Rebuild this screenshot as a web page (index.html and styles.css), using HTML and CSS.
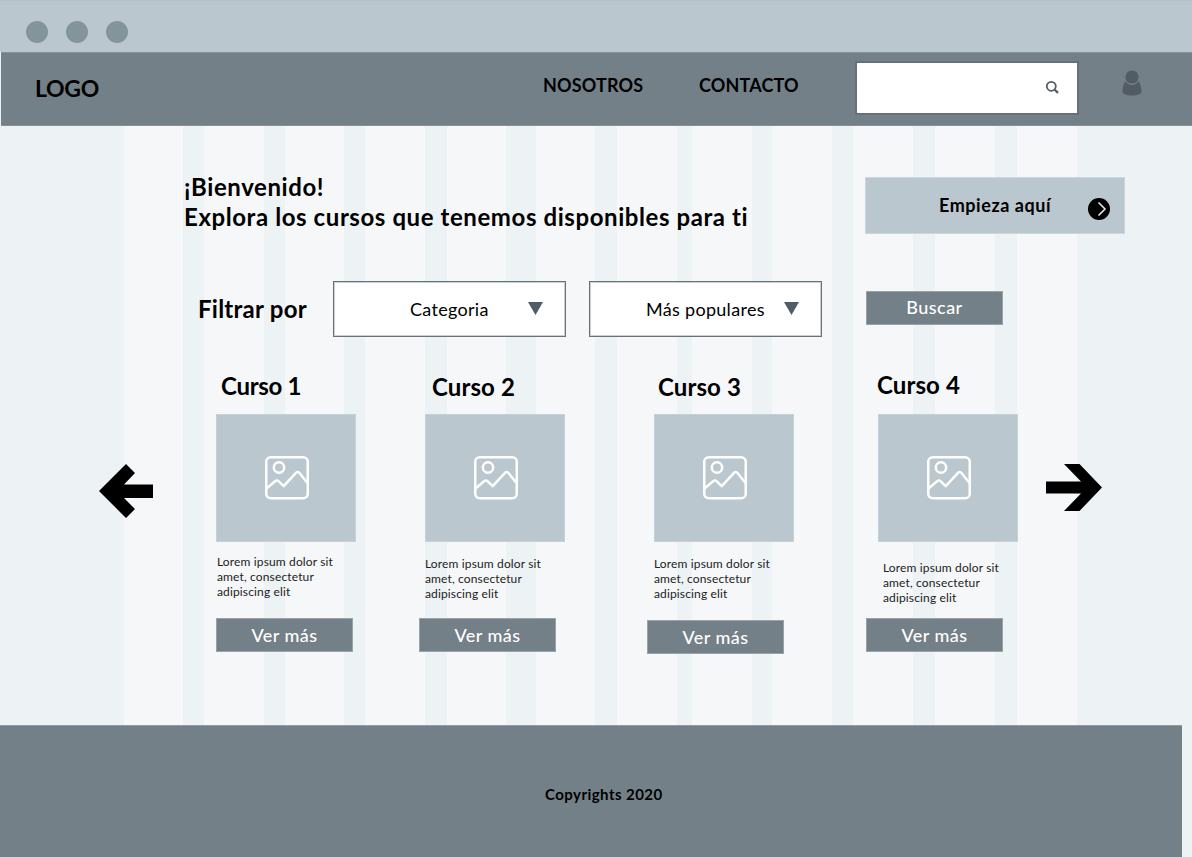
FILE: index.html
```html
<!DOCTYPE html>
<html lang="es">
<head>
<meta charset="utf-8">
<title>Cursos</title>
<link rel="stylesheet" href="styles.css">
</head>
<body>
<svg class="defs" width="0" height="0">
  <symbol id="picture" viewBox="0 0 44 44">
    <g fill="none" stroke="#fff" stroke-width="2.500" stroke-linejoin="round">
      <rect x="1.250" y="1.250" width="41.500" height="41" rx="4.500"/>
      <circle cx="14" cy="11.500" r="5.200"/>
      <path d="M1.500 32.500 L10.400 25 Q12 23.800 13.500 25.200 L18.700 30.200 L30.500 17.300 Q32.600 14.800 34.700 17.300 L42.500 27"/>
    </g>
  </symbol>
</svg>
<div class="chrome"><i class="dot"></i><i class="dot"></i><i class="dot"></i></div>
<nav class="nav">
  <span class="logo">LOGO</span>
  <a class="link nosotros">NOSOTROS</a>
  <a class="link contacto">CONTACTO</a>
  <div class="search">
    <svg width="14" height="14" viewBox="0 0 14 14" fill="none" stroke="#525c64"><circle cx="6.300" cy="6.300" r="4.500" stroke-width="1.800"/><path d="M9.500 9.500l3.500 3.300" stroke-width="2.300"/></svg>
  </div>
  <svg class="user" width="20" height="26" viewBox="0 0 20 26" fill="#525c64"><circle cx="10" cy="7" r="6.600"/><path d="M3.700 11.200C5 13.600 7.300 14.900 10 14.900s5-1.300 6.300-3.700c2.200 2.300 3.200 6.300 3.200 10.300C19.500 24 15.500 25.500 10 25.500S.5 24 .5 21.500c0-4 1-8 3.200-10.300z"/></svg>
</nav>
<main class="main">
  <div class="intro">
    <h1 class="title">¡Bienvenido!<br>Explora los cursos que tenemos disponibles para ti</h1>
    <a class="start"><span class="start-text">Empieza aquí</span>
      <svg width="22" height="22" viewBox="0 0 22 22"><circle cx="11" cy="11" r="11"/><path d="M10.500 4.500l6.500 6.500-6.500 6.500" fill="none" stroke="#dfe7eb" stroke-width="1.600"/></svg></a>
  </div>
  <div class="filters">
    <span class="label">Filtrar por</span>
    <div class="select"><span class="option">Categoria</span><i class="caret"></i></div>
    <div class="select"><span class="option wide">Más populares</span><i class="caret"></i></div>
    <a class="button find">Buscar</a>
  </div>
  <div class="carousel">
    <svg class="prev" width="54" height="54" viewBox="0 0 54 54"><path d="M0 27L27 0l9 9-11 11.500h29v13.500H25L36 45l-9 9z"/></svg>
    <article class="card c1"><h2>Curso 1</h2><div class="thumb"><svg class="pic"><use href="#picture"/></svg></div><p>Lorem ipsum dolor sit<br>amet, consectetur<br>adipiscing elit</p><a class="button">Ver más</a></article>
    <article class="card c2"><h2>Curso 2</h2><div class="thumb"><svg class="pic"><use href="#picture"/></svg></div><p>Lorem ipsum dolor sit<br>amet, consectetur<br>adipiscing elit</p><a class="button">Ver más</a></article>
    <article class="card c3"><h2>Curso 3</h2><div class="thumb"><svg class="pic"><use href="#picture"/></svg></div><p>Lorem ipsum dolor sit<br>amet, consectetur<br>adipiscing elit</p><a class="button">Ver más</a></article>
    <article class="card c4"><h2>Curso 4</h2><div class="thumb"><svg class="pic"><use href="#picture"/></svg></div><p>Lorem ipsum dolor sit<br>amet, consectetur<br>adipiscing elit</p><a class="button">Ver más</a></article>
    <svg class="next" width="56" height="47" viewBox="0 0 56 47"><path d="M18 0h15.500L56 23.500 33.500 47H18l17-17.500H0v-12h35z"/></svg>
  </div>
</main>
<footer class="footer">Copyrights 2020</footer>
</body>
</html>
```
FILE: styles.css
```css
* { box-sizing: border-box; }

body {
  margin: 0;
  width: 1192px;
  height: 857px;
  overflow: hidden;
  background: #edf2f5;
  color: #000;
  font-family: Lato, "Open Sans", sans-serif;
  white-space: nowrap;
}

.defs { position: absolute; }

.chrome {
  display: flex;
  gap: 18px;
  height: 52px;
  padding: 20px 0 0 26px;
  border-top: 1px solid #b5bfc5;
  background: #bbc7cf;
}

.dot { width: 22px; height: 22px; border-radius: 50%; background: #84949b; }

.nav {
  display: flex;
  align-items: flex-start;
  height: 74px;
  margin-left: 1px;
  background: #738088;
  border-top: 1px solid #84939a;
  border-bottom: 1px solid #84939a;
}

.logo { width: 542px; padding: 21px 0 0 34px; font-size: 23px; line-height: 28px; font-weight: 700; letter-spacing: -0.3px; }
.link { padding-top: 21px; font-size: 18px; line-height: 22px; font-weight: 700; letter-spacing: 0.15px; }
.nosotros { width: 156px; }
.contacto { width: 156px; }

.search {
  width: 224px;
  height: 54px;
  margin-top: 8px;
  padding: 17px 0 0 188px;
  background: #fff;
  border: 2px solid #65717a;
}
.search svg { display: block; }

.user { margin: 17px 0 0 43px; }

.main {
  height: 599px;
  background: linear-gradient(90deg,
    #edf2f5 124px, #f5f7f9 124px 183px,
    #edf2f5 183px 204px, #f5f7f9 204px 264px,
    #edf2f5 264px 285px, #f5f7f9 285px 344px,
    #edf2f5 344px 365px, #f5f7f9 365px 425px,
    #edf2f5 425px 447px, #f5f7f9 447px 506px,
    #edf2f5 506px 536px, #f5f7f9 536px 595px,
    #edf2f5 595px 617px, #f5f7f9 617px 677px,
    #edf2f5 677px 692px, #f5f7f9 692px 752px,
    #edf2f5 752px 772px, #f5f7f9 772px 832px,
    #edf2f5 832px 853px, #f5f7f9 853px 913px,
    #edf2f5 913px 935px, #f5f7f9 935px 995px,
    #edf2f5 995px 1017px, #f5f7f9 1017px 1077px,
    #edf2f5 1077px);
}

.intro { display: flex; height: 155px; padding: 46px 0 0 184px; }
.title { width: 681px; margin: 0; font-size: 24px; line-height: 30px; font-weight: 700; letter-spacing: 0.58px; }

.start {
  display: flex;
  width: 260px;
  height: 57px;
  margin-top: 5px;
  border: 1px solid #ccd6dc;
  background: #bbc7cf;
  font-size: 18px;
  font-weight: 700;
  letter-spacing: 0.55px;
}
.start-text { width: 222px; padding: 16px 0 0 73px; line-height: 22px; }
.start svg { margin-top: 20px; }

.filters { display: flex; height: 88px; padding-left: 198px; }
.label { width: 135px; font-size: 24px; line-height: 55px; font-weight: 700; letter-spacing: 0.25px; }

.select {
  display: flex;
  width: 233px;
  height: 56px;
  margin-right: 23px;
  border: 1px solid #66737b;
  outline: 1px solid #c9cfd2;
  outline-offset: -2px;
  background: #fff;
  font-size: 18px;
  line-height: 55px;
  letter-spacing: 0.3px;
}
.option { width: 194px; padding-left: 76px; }
.option.wide { padding-left: 56px; }
.caret { width: 15px; height: 13px; margin-top: 20px; background: #525c64; clip-path: polygon(0 0, 100% 0, 50% 100%); }

.button {
  width: 137px;
  height: 34px;
  border: 1px solid #98a4aa;
  background: #738088;
  color: #fff;
  font-size: 18px;
  line-height: 32px;
  font-weight: 500;
  letter-spacing: 0.45px;
  text-align: center;
}
.find { margin: 10px 0 0 21px; line-height: 31px; }

.carousel { display: flex; padding-left: 99px; }
.prev { margin: 95px 63px 0 0; flex: none; }
.next { margin: 95px 0 0 0; flex: none; }

.card { display: flex; flex-direction: column; flex: none; }
.card h2 { height: 45px; margin: 0; font-size: 24px; line-height: 30px; font-weight: 700; letter-spacing: 0.1px; }
.thumb { width: 140px; height: 128px; padding: 41px 0 0 49px; border: 1px solid #c6d0d7; background: #bbc7cf; }
.pic { display: block; width: 44px; height: 44px; margin-left: -1px; }
.card p { height: 76px; margin: 0; padding: 12px 0 0 1px; color: #222; font-size: 12px; line-height: 15px; letter-spacing: 0.14px; }

.c1 { width: 209px; }
.c2 { width: 229px; }
.c3 { width: 224px; }
.c4 { width: 168px; }
.card.c1 h2 { padding: 2px 0 0 5px; letter-spacing: -0.3px; }
.c2 h2 { padding: 3px 0 0 7px; }
.c3 h2 { padding: 3px 0 0 4px; }
.c4 h2 { margin-left: -2px; padding: 1px 0 0 1px; }
.card.c2 p { padding-top: 14px; margin-left: -1px; }
.c2 .button { margin-left: -6px; }
.card.c3 p { padding: 14px 0 0; height: 78px; }
.c3 .button { margin-left: -7px; }
.card.c4 p { padding: 18px 0 0 5px; }
.c4 .button { margin-left: -12px; }

.footer {
  width: 1182px;
  height: 132px;
  padding: 59px 0 0 545px;
  border-top: 1px solid #929da3;
  background: #738088;
  font-size: 15px;
  line-height: 18px;
  font-weight: 700;
  letter-spacing: 0.45px;
}
```
